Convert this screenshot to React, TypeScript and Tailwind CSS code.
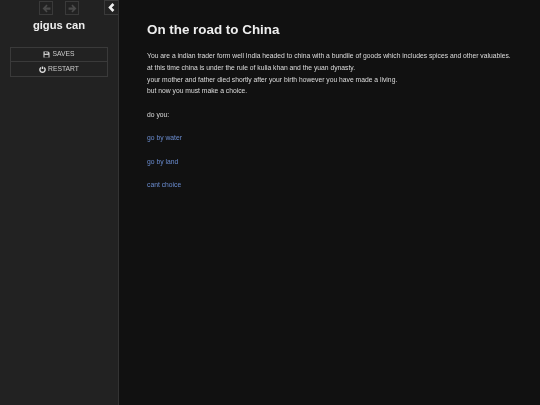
const SaveIcon = () => (
  <svg viewBox="0 0 16 16" className="h-[7px] w-[7px] fill-[#cccccc]">
    <path d="M1 1h11l3 3v11H1zM4 2v4h7V2zM8 3h2v2H8zM3.500 9v5h9V9z" fillRule="evenodd" />
  </svg>
);

const PowerIcon = () => (
  <svg viewBox="0 0 16 16" className="h-[7px] w-[7px]">
    <path d="M8 1v6M4.500 3.500a6 6 0 1 0 7 0" fill="none" stroke="#dddddd" strokeWidth="3.200" />
  </svg>
);

const ArrowLeftSolid = () => (
  <svg viewBox="0 0 16 16" className="h-[9px] w-[9px] fill-[#4a4a4a]">
    <path d="M8 1l2 2-3 3h8v4H7l3 3-2 2-7-7z" />
  </svg>
);

const ArrowRightSolid = () => (
  <svg viewBox="0 0 16 16" className="h-[9px] w-[9px] fill-[#4a4a4a]">
    <path d="M8 1l-2 2 3 3H1v4h8l-3 3 2 2 7-7z" />
  </svg>
);

const ChevronSolid = () => (
  <svg viewBox="0 0 10 14" className="h-[9px] w-[7px] fill-[#eeeeee]">
    <path d="M6.500 0L9.500 3 5.500 7l4 4-3 3L0 7z" />
  </svg>
);

const App = () => {
  const story = [
    'You are a indian trader form well India headed to china with a bundile of goods which includes spices and other valuables.',
    'at this time china is under the rule of kulia khan and the yuan dynasty.',
    'your mother and father died shortly after your birth however you have made a living.',
    'but now you must make a choice.',
  ];
  const choices = ['go by water', 'go by land', 'cant choice'];

  return (
    <div className="flex h-[405px] w-[540px] overflow-hidden bg-[#111111] font-['Liberation_Sans',Arial,sans-serif] antialiased">
      <aside className="flex w-[119px] shrink-0 flex-col border-r border-[#333333] bg-[#222222]">
        <div className="flex h-[17px] items-start pt-px">
          <div className="ml-[39px] flex gap-[12px]">
            <button className="flex h-[14px] w-[14px] items-center justify-center border border-[#3a3a3a]">
              <ArrowLeftSolid />
            </button>
            <button className="flex h-[14px] w-[14px] items-center justify-center border border-[#3a3a3a]">
              <ArrowRightSolid />
            </button>
          </div>
          <button className="ml-auto mt-[-1px] flex h-[15px] w-[14px] items-center justify-center border border-r-0 border-[#3a3a3a]">
            <ChevronSolid />
          </button>
        </div>
        <div className="will-change-transform">
          <h1 className="text-center text-[11.200px] leading-[16px] font-bold text-[#eeeeee]">gigus can</h1>
          <div className="mx-[10px] mt-[14px] flex flex-col border border-[#3a3a3a] text-[6.750px] text-[#cccccc]">
            <div className="flex h-[14px] items-center justify-center gap-[2px] border-b border-[#3a3a3a]">
              <SaveIcon />
              SAVES
            </div>
            <div className="flex h-[14px] items-center justify-center gap-[2px]">
              <PowerIcon />
              RESTART
            </div>
          </div>
        </div>
      </aside>
      <main className="flex-1 pl-[28px] pr-[20px] pt-[21px] text-[6.750px] leading-[11.800px] text-[#dddddd] will-change-transform">
        <h2 className="mb-[11px] text-[13.400px] leading-[18px] font-bold text-[#eeeeee]">On the road to China</h2>
        {story.map(line => (
          <p key={line} className="whitespace-nowrap">{line}</p>
        ))}
        <p className="mt-[11.800px]">do you:</p>
        {choices.map(choice => (
          <p key={choice} className="mt-[11.700px] text-[#6a8ccf]">{choice}</p>
        ))}
      </main>
    </div>
  );
};

export default App;
